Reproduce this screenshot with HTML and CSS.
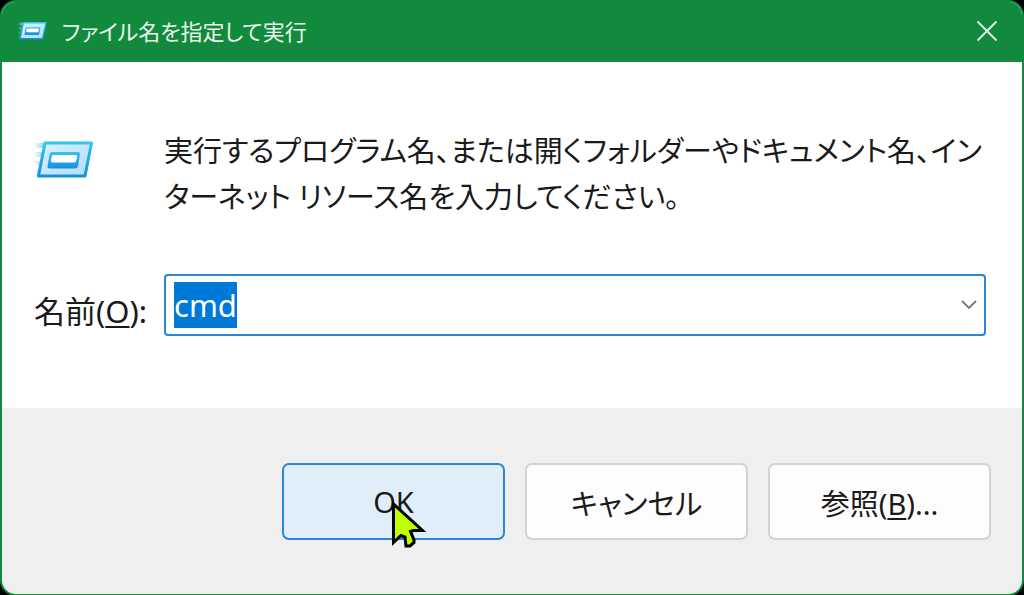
FILE: index.html
```html
<!DOCTYPE html>
<html lang="ja">
<head>
  <meta charset="UTF-8">
  <meta name="viewport" content="width=device-width, initial-scale=1.0">
  <title>ファイル名を指定して実行</title>
  <link rel="stylesheet" href="styles.css">
</head>
<body>
  <svg width="0" height="0" class="defs" aria-hidden="true">
    <defs>
      <linearGradient id="edge" x1="0" y1="0" x2="0" y2="1">
        <stop offset="0" stop-color="#35c3f0"/>
        <stop offset="1" stop-color="#1490df"/>
      </linearGradient>
      <linearGradient id="face" x1="0" y1="0" x2="1" y2="1">
        <stop offset="0" stop-color="#d8f1fd"/>
        <stop offset="1" stop-color="#b5dcf7"/>
      </linearGradient>
      <linearGradient id="trail" x1="0" y1="0" x2="1" y2="0">
        <stop offset="0" stop-color="#8fd3f5" stop-opacity="0"/>
        <stop offset="1" stop-color="#8fd3f5"/>
      </linearGradient>
      <symbol id="run-icon" viewBox="0 0 62 40">
        <path d="M0 3h10l-1 5H0zM0 12h9l-1 5H0zM0 21h7l-1 5H0zM0 30h5l-1 5H0z" fill="url(#trail)"/>
        <path d="M11 3h46.500l-6.500 33H4.500z" fill="url(#face)" stroke="url(#edge)" stroke-width="3" stroke-linejoin="round"/>
        <path d="M17.500 12h26.500q2.500 0 2 2.500l-2 11.500q-.4 2.500-2.900 2.500h-25.500q-2.500 0-2.100-2.500l2-11.500q.3-2.500 2-2.500z" fill="url(#edge)"/>
        <path d="M19.500 15h22q2 0 1.700 2l-.8 3.500q-.4 2-2.300 2h-21.500q-2 0-1.700-2l.7-3.500q.3-2 1.900-2z" fill="#fff"/>
      </symbol>
    </defs>
  </svg>

  <div class="dialog" role="dialog" aria-labelledby="title">
    <header class="titlebar">
      <svg class="title-icon" aria-hidden="true"><use href="#run-icon"/></svg>
      <h1 id="title">ファイル名を指定して実行</h1>
      <button class="close" type="button" aria-label="閉じる">
        <svg width="22" height="22" viewBox="0 0 22 22"><path d="M1.500 1.500l19 19M20.500 1.500l-19 19" stroke="#e4f3e8" stroke-width="1.800" fill="none"/></svg>
      </button>
    </header>

    <form class="run-form">
      <div class="content">
        <div class="intro">
          <svg class="run-icon" aria-hidden="true"><use href="#run-icon"/></svg>
          <p>実行するプログラム名、または開くフォルダーやドキュメント名、イン<br>ターネット リソース名を入力してください。</p>
        </div>
        <div class="field">
          <label for="command">名前(<u>O</u>):</label>
          <div class="combo">
            <input id="command" type="text" value="cmd" autocomplete="off" spellcheck="false" autofocus>
            <button class="drop" type="button" aria-label="履歴を表示">
              <svg width="18" height="12" viewBox="0 0 18 12"><path d="M2 2l7 7 7-7" stroke="#777" stroke-width="1.800" fill="none"/></svg>
            </button>
          </div>
        </div>
      </div>

      <div class="actions">
        <button class="btn btn-default" type="submit">OK
          <svg class="cursor" width="36" height="48" viewBox="0 0 36 48" aria-hidden="true">
            <path d="M2.500 3v38.500L10 34.500l4 1.500 1 9h4l4-3.500v-2.500l-3.500-8.500 3-1h9z" fill="#bfff00" stroke="#000" stroke-width="3"/>
          </svg>
        </button>
        <button class="btn" type="button">キャンセル</button>
        <button class="btn" type="button">参照(<u>B</u>)...</button>
      </div>
    </form>
  </div>

  <script>
    // Select the last command so typing replaces it
    const command = document.getElementById('command');
    command.focus();
    command.select();
  </script>
</body>
</html>
```

FILE: styles.css
```css
* {
  box-sizing: border-box;
}
body {
  margin: 0;
  background-color: #000;
  color: #1a1a1a;
  font-family: "Noto Sans", "Noto Sans CJK JP", sans-serif;
  font-size: 29px;
  font-feature-settings: "palt";
}
.defs {
  position: absolute;
}
.dialog {
  display: flex;
  flex-direction: column;
  min-height: 100vh;
  border: 2px solid #128a3e;
  border-radius: 16px;
  background-color: #efefef;
  overflow: hidden;
}
.titlebar {
  display: flex;
  align-items: center;
  height: 60px;
  padding: 0 24px 2px 16px;
  background-color: #128a3e;
  color: #e9f5ec;
}
.title-icon {
  width: 30px;
  height: 20px;
  margin-right: 14px;
}
h1 {
  flex: 1;
  margin: 0;
  font-size: 22px;
  font-weight: 400;
  line-height: 28px;
}
.close,
.drop {
  display: flex;
  padding: 0;
  border: none;
  background: none;
}
.run-form {
  display: flex;
  flex: 1;
  flex-direction: column;
}
.content {
  padding: 66px 36px 72px 32px;
  background-color: #fff;
}
.intro {
  display: flex;
  margin-bottom: 54px;
}
.run-icon {
  flex: none;
  width: 62px;
  height: 40px;
  margin: 12px 68px 0 0;
}
p {
  margin: 0;
  line-height: 46px;
  white-space: nowrap;
}
.field {
  display: flex;
  align-items: center;
}
label {
  flex: none;
  width: 130px;
  padding-top: 8px;
  font-size: 31px;
}
u {
  text-decoration-thickness: 2px;
  text-underline-offset: 3px;
}
.combo {
  display: flex;
  flex: 1;
  align-items: center;
  height: 62px;
  padding: 0 6px 0 7px;
  border: 2px solid #2b86d6;
  border-radius: 4px;
}
input {
  flex: 1;
  min-width: 0;
  height: 46px;
  padding: 0 1px;
  border: none;
  outline: none;
  background: none;
  color: #1a1a1a;
  font: inherit;
  font-size: 31px;
  line-height: 46px;
}
input::selection {
  background-color: #0078d7;
  color: #fff;
}
.actions {
  display: flex;
  justify-content: flex-end;
  gap: 20px;
  padding: 55px 31px 54px;
}
.btn {
  position: relative;
  width: 223px;
  height: 77px;
  padding: 0;
  border: 2px solid #d2d2d2;
  border-radius: 7px;
  background-color: #fdfdfd;
  color: #1a1a1a;
  font: inherit;
  font-feature-settings: inherit;
}
.btn-default {
  border-color: #2b86d6;
  background-color: #e0eef9;
}
.cursor {
  position: absolute;
  left: 107px;
  top: 36px;
}
```
